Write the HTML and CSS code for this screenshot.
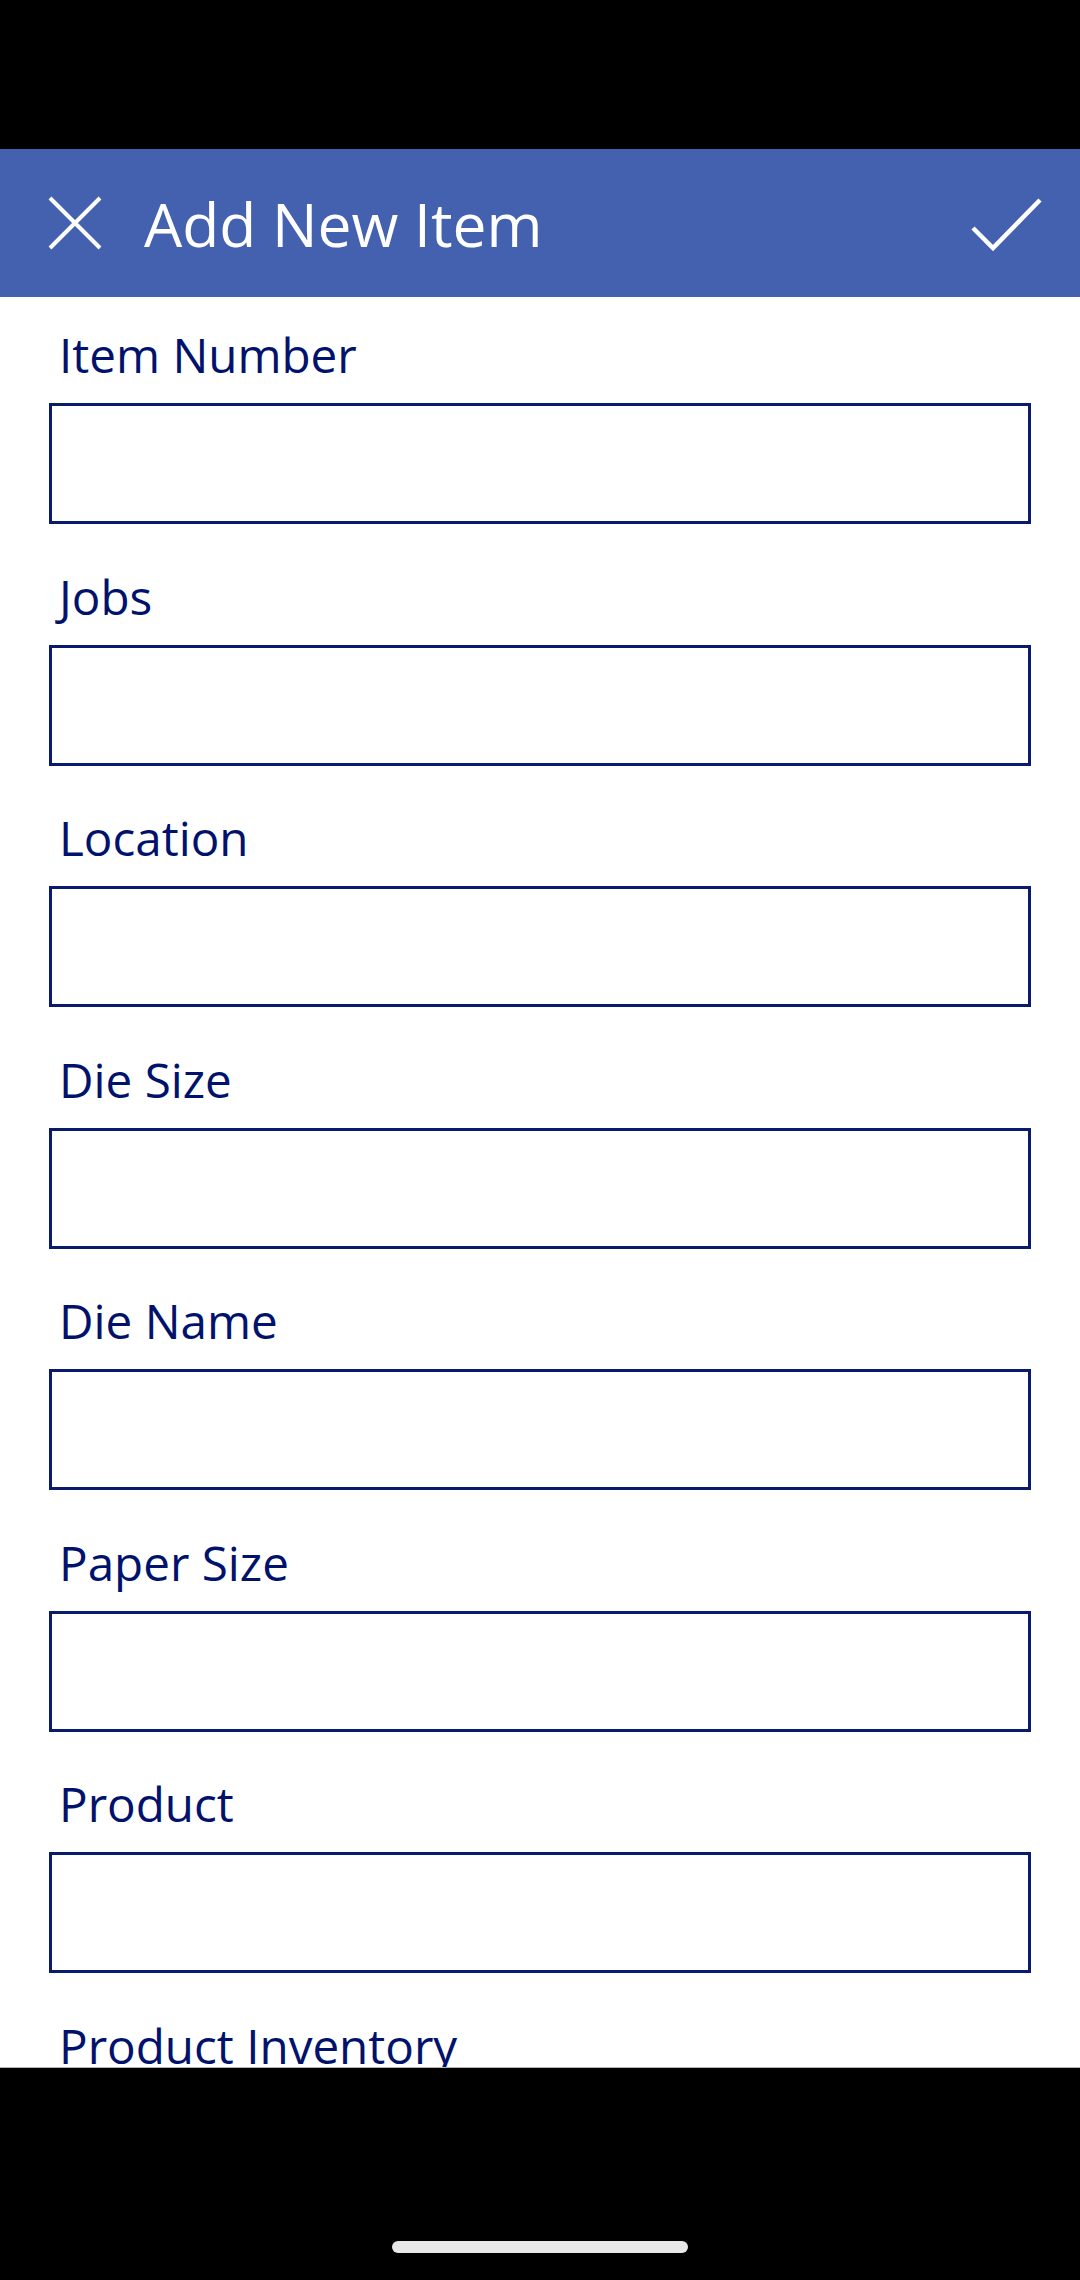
FILE: index.html
```html
<!DOCTYPE html>
<html lang="en">
<head>
<meta charset="utf-8">
<title>Add New Item</title>
<link rel="stylesheet" href="styles.css">
</head>
<body>
<div class="phone">
  <div class="status-bar"></div>
  <header class="app-header">
    <svg class="icon-close" width="54" height="54" viewBox="0 0 54 54" aria-hidden="true">
      <path d="M2 2 L52 52 M52 2 L2 52" stroke="#ffffff" stroke-width="4" fill="none"/>
    </svg>
    <h1 class="title">Add New Item</h1>
    <svg class="icon-check" width="80" height="80" viewBox="0 0 80 80" aria-hidden="true">
      <path d="M7 45 L27 65 L74 17" stroke="#ffffff" stroke-width="4.5" fill="none"/>
    </svg>
  </header>
  <main class="form">
    <div class="field"><label class="field-label">Item Number</label><div class="field-input"></div></div>
    <div class="field"><label class="field-label">Jobs</label><div class="field-input"></div></div>
    <div class="field"><label class="field-label">Location</label><div class="field-input"></div></div>
    <div class="field"><label class="field-label">Die Size</label><div class="field-input"></div></div>
    <div class="field"><label class="field-label">Die Name</label><div class="field-input"></div></div>
    <div class="field"><label class="field-label">Paper Size</label><div class="field-input"></div></div>
    <div class="field"><label class="field-label">Product</label><div class="field-input"></div></div>
    <div class="field"><label class="field-label">Product Inventory</label><div class="field-input"></div></div>
  </main>
  <div class="nav-bar"><div class="home-pill"></div></div>
</div>
</body>
</html>
```
FILE: styles.css
```css
html, body {
  margin: 0;
  padding: 0;
  background: #000000;
}

.phone {
  width: 1080px;
  height: 2280px;
  display: flex;
  flex-direction: column;
  font-family: "Open Sans", "Noto Sans", sans-serif;
  overflow: hidden;
}

.status-bar {
  flex: none;
  height: 149px;
  background: #000000;
}

.app-header {
  flex: none;
  height: 148px;
  background: #4361ae;
  display: flex;
  align-items: center;
  box-sizing: border-box;
  padding-left: 48px;
  padding-right: 34px;
}

.icon-close {
  flex: none;
  display: block;
}

.title {
  margin: 0 0 0 42px;
  font-weight: 400;
  font-size: 60.5px;
  line-height: 84px;
  padding-top: 2px;
  color: #ffffff;
  flex: 1;
}

.icon-check {
  flex: none;
  display: block;
}

.form {
  flex: none;
  height: 1770px;
  background: #ffffff;
  overflow: hidden;
  box-sizing: border-box;
  padding-top: 28px;
  display: flex;
  flex-direction: column;
  gap: 42.5px;
}

.field {
  display: flex;
  flex-direction: column;
  gap: 18px;
  flex: none;
}

.field-label {
  display: block;
  font-size: 47.6px;
  line-height: 60px;
  height: 60px;
  color: #00126b;
  padding-left: 59px;
}

.field-input {
  box-sizing: border-box;
  margin-left: 49px;
  width: 982px;
  height: 121px;
  border: 3px solid #0a1a6c;
  background: #ffffff;
}

.nav-bar {
  flex: none;
  height: 213px;
  box-sizing: border-box;
  border-top: 1px solid #b4b4b4;
  background: #000000;
  display: flex;
  justify-content: center;
  align-items: flex-end;
  padding-bottom: 27px;
}

.home-pill {
  width: 296px;
  height: 12px;
  border-radius: 6px;
  background: #e8e8e8;
}
```
